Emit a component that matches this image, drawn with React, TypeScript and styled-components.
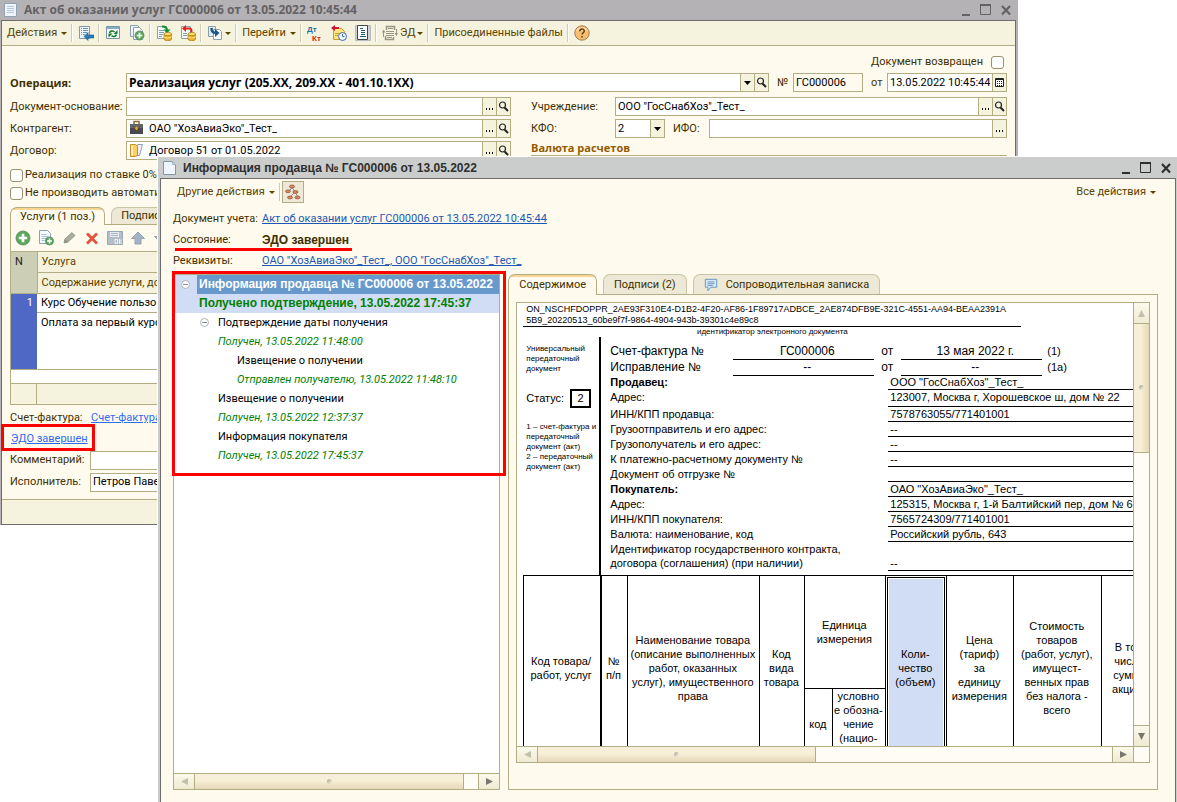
import React from 'react';
import styled, { createGlobalStyle, css } from 'styled-components';

const c = {
  cream: '#fefaee',
  beige: '#f5f3de',
  line: '#b3ad84',
  dark: '#6d6d6d',
  label: '#403000',
  menu: '#5a4200',
  red: '#ff0000',
  link: '#1c57b4',
  sel: '#d1dcf5',
};

const ui = "Roboto, 'Liberation Sans', sans-serif";
const uiBold = "'Open Sans', 'Liberation Sans', sans-serif";
const narrowBold = "'Liberation Sans', Arial, sans-serif";
const sheetFont = "'Liberation Sans', Arial, sans-serif";

const Global = createGlobalStyle`
  *, *::before, *::after { box-sizing: border-box; }
  body { margin: 0; background: #fff; color: #000; font: 11px/14px ${ui}; }
  button, input, select { font: inherit; color: inherit; margin: 0; }
  a { color: ${c.link}; }
`;

const Desktop = styled.main`
  position: relative;
  min-height: 100vh;
  overflow: hidden;
  background: #fff;
`;

/* ---------- windows ---------- */

const MainWindow = styled.section`
  position: absolute;
  top: 0;
  left: 0;
  right: 159px;
  display: flex;
  flex-direction: column;
  padding: 0 2px 0 1px;
  background: #b4b2b5;
`;

const InfoWindow = styled.section`
  position: absolute;
  top: 157px;
  left: 158px;
  right: 0;
  bottom: 0;
  display: flex;
  flex-direction: column;
  padding: 0 1px 0 2px;
  background: #cbcdcc;
  box-shadow: 0 -1px 0 #fff, -1px 0 0 #fff;
`;

const WindowTitle = styled.header<{ $active?: boolean }>`
  display: flex;
  align-items: center;
  gap: 6px;
  height: ${(p) => (p.$active ? 21 : 20)}px;
  padding: 0 2px 0 3px;
  color: ${(p) => (p.$active ? '#2e2e2e' : '#646264')};
  h1 {
    flex: 1;
    margin: 0;
    font: bold 12px/18px ${(p) => (p.$active ? narrowBold : uiBold)};
    white-space: nowrap;
  }
`;

const WindowButton = styled.button`
  display: flex;
  width: 16px;
  height: 16px;
  margin-left: -2px;
  padding: 0;
  border: 0;
  background: none;
`;

const WindowBody = styled.div`
  flex: 1;
  display: flex;
  flex-direction: column;
  min-height: 0;
  border: 1px solid ${c.dark};
  background: ${c.cream};
`;

const InfoBody = styled(WindowBody)`
  border-bottom: 0;
  padding: 2px 17px 12px 12px;
`;

/* ---------- toolbar ---------- */

const Toolbar = styled.div`
  display: flex;
  align-items: center;
  height: 25px;
  padding-left: 1px;
  background: ${c.beige};
  border-bottom: 1px solid ${c.line};
`;

const ToolButton = styled.button`
  display: flex;
  align-items: center;
  gap: 4px;
  padding: 0 4px;
  border: 0;
  background: none;
  color: ${c.menu};
  white-space: nowrap;
`;

const IconTool = styled(ToolButton)`
  gap: 2px;
`;

const Separator = styled.span`
  width: 2px;
  height: 18px;
  margin-right: 1px;
  background: linear-gradient(to right, #cfcbb4 50%, #fff 50%);
`;

const Arrow = styled.span`
  width: 0;
  height: 0;
  border: 3px solid transparent;
  border-top-color: currentColor;
  border-bottom-width: 0;
`;

/* ---------- form ---------- */

const Form = styled.form`
  display: flex;
  flex-direction: column;
  padding: 9px 8px 0;
  color: ${c.label};
`;

const ReturnedRow = styled.label`
  display: flex;
  justify-content: flex-end;
  align-items: center;
  gap: 8px;
  height: 14px;
  padding-right: 3px;
`;

const CheckBox = styled.input.attrs({ type: 'checkbox' })`
  appearance: none;
  width: 13px;
  height: 13px;
  border: 1px solid #9c916c;
  border-radius: 3px;
  background: #fff;
`;

const CheckLabel = styled.label`
  display: flex;
  align-items: center;
  gap: 2px;
  height: 18px;
  white-space: nowrap;
`;

const Checks = styled.div`
  display: flex;
  flex-direction: column;
  padding-top: 6px;
`;

const HeadRow = styled.div`
  display: flex;
  align-items: center;
  margin: 4px 0 5px;
`;

const Columns = styled.div`
  display: grid;
  grid-template-columns: 501fr 476fr;
  column-gap: 20px;
`;

const Column = styled.div`
  display: flex;
  flex-direction: column;
  gap: 3px;
`;

const Row = styled.div`
  display: flex;
  align-items: center;
`;

const Label = styled.label<{ $w: number; $bold?: boolean }>`
  flex: 0 0 ${(p) => p.$w}px;
  white-space: nowrap;
  ${(p) => p.$bold && css`font: bold 11px/16px ${uiBold};`}
`;

const Between = styled.label<{ $w: number }>`
  flex: 0 0 ${(p) => p.$w}px;
  padding-left: 8px;
`;

const Field = styled.div<{ $w?: number; $plain?: boolean }>`
  display: flex;
  align-items: stretch;
  flex: ${(p) => (p.$w ? `0 0 ${p.$w}px` : '1 1 0')};
  min-width: 0;
  height: 19px;
  border: 1px solid ${c.line};
  background: ${(p) => (p.$plain ? c.cream : '#fff')};
  color: #000;
  > svg {
    flex: none;
    margin: 0 0 0 2px;
  }
  input, select {
    flex: 1;
    width: 0;
    min-width: 0;
    padding: 0 2px;
    border: 0;
    outline: 0;
    background: none;
    appearance: none;
  }
  svg + input {
    padding-left: 4px;
  }
`;

const BoldField = styled(Field)`
  select { font: bold 12px/16px ${uiBold}; }
`;

const FieldButton = styled.button`
  display: flex;
  align-items: center;
  justify-content: center;
  flex: 0 0 14px;
  padding: 0;
  border: 0;
  border-left: 1px solid ${c.line};
  background: ${c.beige};
  color: #000;
`;

const GroupTitle = styled.h2`
  height: 15px;
  margin: 0;
  border-bottom: 1px solid ${c.line};
  color: #945c00;
  font: bold 11px/14px ${uiBold};
`;

/* ---------- tabs ---------- */

const Tabs = styled.div`
  position: relative;
  display: flex;
  gap: 6px;
  height: 21px;
  margin-bottom: -1px;
`;

const Tab = styled.button<{ $active?: boolean }>`
  display: flex;
  align-items: center;
  gap: 8px;
  height: ${(p) => (p.$active ? 21 : 20)}px;
  padding: 0 10px;
  border: 1px solid #c8c5a4;
  border-bottom: 0;
  border-radius: 7px 7px 0 0;
  background: #eee9d6;
  color: ${c.label};
  white-space: nowrap;
  ${(p) =>
    p.$active &&
    css`
      border-color: ${c.line};
      background: linear-gradient(#fbd592 2px, ${c.cream} 2px);
    `}
`;

const ServicesTabs = styled(Tabs)`
  margin-top: 5px;
  height: 18px;
  button {
    height: 18px;
    padding: 0 9px;
  }
  button:last-child { height: 17px; }
`;

const ServicesPanel = styled.div`
  border: 1px solid ${c.line};
  border-bottom: 0;
`;

const SmallTools = styled.div`
  display: flex;
  align-items: center;
  gap: 7px;
  height: 26px;
  padding-left: 4px;
  button {
    display: flex;
    padding: 0;
    border: 0;
    background: none;
  }
`;

const ServicesTable = styled.table`
  width: 100%;
  border-collapse: collapse;
  table-layout: fixed;
  color: #000;
  border-top: 1px solid ${c.line};
  th, td {
    padding: 0 4px;
    border-bottom: 1px solid ${c.line};
    font-weight: normal;
    text-align: left;
    vertical-align: top;
    white-space: nowrap;
    line-height: 18px;
    background: #fff;
  }
  th {
    height: 21px;
    line-height: 20px;
    background: ${c.beige};
    color: ${c.menu};
  }
  th:first-child[rowspan] {
    background: #cdceb6;
    color: #222;
    border-right: 1px solid ${c.line};
  }
`;

const RowNumber = styled.td`
  && {
    background: #4f68c6;
    color: #fff;
    text-align: right;
  }
`;

const CellLine = styled.td`
  height: 19px;
`;

const CellTall = styled.td`
  height: 57px;
  && { line-height: 20px; }
`;

const TableGap = styled.div`
  height: 13px;
  background: #fff;
`;

const TableFoot = styled.div`
  height: 22px;
  padding-left: 25px;
  border: solid ${c.line};
  border-width: 1px 0;
  background: ${c.beige};
  &::before {
    content: '';
    display: block;
    width: 1px;
    height: 20px;
    background: ${c.line};
  }
`;

const BrightLink = styled.a`
  color: #2f6bf0;
`;

const Footer = styled.div`
  display: grid;
  grid-template-rows: 22px 20px 22px 22px;
  padding-top: 2px;
`;

const Marked = styled.span`
  position: relative;
  padding-left: 1px;
  &::after {
    content: '';
    position: absolute;
    inset: -8px -7px -5px -9px;
    border: 3px solid ${c.red};
  }
`;

const StatusBar = styled.div`
  height: 25px;
  margin-top: 6px;
  border-top: 1px solid ${c.line};
  background: ${c.beige};
`;

/* ---------- seller information window ---------- */

const InfoTools = styled.div`
  display: flex;
  align-items: center;
  height: 22px;
  margin-bottom: 5px;
  > :last-child {
    margin-left: auto;
    padding-right: 2px;
  }
`;

const ToggleTool = styled.button`
  display: flex;
  align-items: center;
  justify-content: center;
  width: 22px;
  height: 22px;
  padding: 0;
  border: 1px solid ${c.line};
  background: #efe8d6;
`;

const Facts = styled.dl`
  display: grid;
  grid-template-columns: 89px 1fr;
  grid-auto-rows: 21px;
  align-items: center;
  margin: 0 0 3px;
  color: ${c.label};
  white-space: nowrap;
  dd { margin: 0; }
`;

const State = styled.dd`
  font: bold 12px/16px ${narrowBold};
`;

const StateTerm = styled.dt`
  position: relative;
  &::after {
    content: '';
    position: absolute;
    left: 2px;
    top: 15px;
    width: 177px;
    height: 3px;
    background: ${c.red};
  }
`;

const Split = styled.div`
  flex: 1;
  display: flex;
  gap: 8px;
  min-height: 0;
`;

const TreePane = styled.div`
  position: relative;
  flex: 326 1 0;
  display: flex;
  flex-direction: column;
  min-width: 0;
  border: 1px solid ${c.line};
  background: #fff;
  &::after {
    content: '';
    position: absolute;
    top: -4px;
    left: -2px;
    right: -7px;
    height: 205px;
    border: 3px solid ${c.red};
    pointer-events: none;
  }
`;

const Tree = styled.ul`
  flex: 1;
  margin: 0;
  padding: 0;
  list-style: none;
  overflow: hidden;
  line-height: 19px;
  white-space: nowrap;
`;

const Node = styled.li<{ $level: number; $selected?: boolean }>`
  display: grid;
  grid-template-columns: ${(p) => p.$level * 19 + 23}px 1fr;
  grid-auto-rows: 19px;
  align-items: center;
  > button {
    grid-row: 1;
    justify-self: end;
    display: flex;
    margin-right: 7px;
    padding: 0;
    border: 0;
    background: none;
  }
  ${(p) =>
    p.$selected &&
    css`
      background: ${c.sel};
      font: bold 12px/19px ${narrowBold};
    `}
`;

const NodeName = styled.span<{ $selected?: boolean }>`
  grid-column: 2;
  padding-left: 2px;
  ${(p) => p.$selected && css`background: #6899cd; color: #fff;`}
`;

const NodeState = styled.span<{ $selected?: boolean }>`
  grid-column: 2;
  padding-left: 2px;
  color: #008000;
  font-style: ${(p) => (p.$selected ? 'normal' : 'italic')};
`;

/* ---------- scroll bars ---------- */

const HBar = styled.div`
  display: flex;
  height: 16px;
  border-top: 1px solid ${c.line};
  background: #fffcf6;
`;

const VBar = styled.div`
  display: flex;
  flex-direction: column;
  width: 16px;
  border-left: 1px solid ${c.line};
  background: #fffcf6;
`;

const ScrollButton = styled.button<{ $side: 'left' | 'right' | 'top' | 'bottom' }>`
  display: flex;
  align-items: center;
  justify-content: center;
  flex: 0 0 21px;
  padding: 0;
  border: 0;
  border-${(p) => ({ left: 'right', right: 'left', top: 'bottom', bottom: 'top' })[p.$side]}: 1px solid ${c.line};
  background: linear-gradient(#fbf9ec, #efead2);
`;

const HThumb = styled.div<{ $share: number }>`
  display: flex;
  align-items: center;
  justify-content: center;
  flex: ${(p) => p.$share} 1 0;
  border-right: 1px solid ${c.line};
  background: linear-gradient(#f6eedb, #f8efd6 45%, #f0e6cb 65%, #e6d8ba);
`;

const VThumb = styled(HThumb)`
  border-right: 0;
  border-bottom: 1px solid ${c.line};
  background: linear-gradient(to right, #f6eedb, #f8efd6 45%, #f0e6cb 65%, #e6d8ba);
`;

const Track = styled.div<{ $share: number }>`
  flex: ${(p) => p.$share} 1 0;
`;

const Grip = styled.i`
  width: 5px;
  height: 5px;
  border-radius: 50%;
  background: linear-gradient(135deg, #a9a48c, #fbf7ea);
`;

/* ---------- document pane ---------- */

const DocPane = styled.div`
  flex: 651 1 0;
  display: flex;
  flex-direction: column;
  min-width: 0;
`;

const DocPanel = styled.div`
  flex: 1;
  display: flex;
  min-height: 0;
  padding: 7px 7px 26px;
  border: 1px solid ${c.line};
`;

const DocFrame = styled.div`
  flex: 1;
  display: grid;
  grid-template: minmax(0, 1fr) 16px / minmax(0, 1fr) 16px;
  border: 1px solid ${c.line};
  background: #fffcf6;
`;

const Corner = styled.div`
  border: solid ${c.line};
  border-width: 1px 0 0 1px;
`;

const Viewport = styled.div`
  overflow: hidden;
  background: #fff;
`;

const Sheet = styled.article`
  width: 640px;
  padding: 1px 0 0 6px;
  font: 11px/14px ${sheetFont};
  color: #000;
  white-space: nowrap;
`;

const Ident = styled.div`
  width: 498px;
  padding-left: 3px;
  border-bottom: 1px solid #000;
  font-size: 9px;
  line-height: 11px;
`;

const Tiny = styled.p`
  margin: 0;
  font-size: 8px;
  line-height: 10px;
`;

const IdentNote = styled(Tiny)`
  width: 498px;
  text-align: center;
`;

const SheetMain = styled.div`
  display: flex;
`;

const Side = styled.div`
  display: flex;
  flex-direction: column;
  gap: 14px;
  width: 78px;
  padding: 7px 0 0 3px;
  border-right: 2px solid #000;
`;

const Status = styled.div`
  display: flex;
  align-items: center;
  gap: 6px;
  height: 20px;
  b {
    width: 21px;
    height: 19px;
    border: 2px solid #000;
    font-weight: normal;
    line-height: 15px;
    text-align: center;
  }
`;

const Facture = styled.div`
  flex: 1;
  padding: 6px 0 4px 9px;
`;

const NumberRow = styled.div`
  display: grid;
  grid-template-columns: 123px 141px 27px 141px 1fr;
  height: 16px;
  font-size: 12px;
  line-height: 16px;
  > * { padding-left: 7px; }
  > :first-child { padding-left: 0; }
  > :last-child { padding-left: 5px; font-size: 11px; }
`;

const Blank = styled.span`
  border-bottom: 1px solid #000;
  text-align: center;
  line-height: 16px;
`;

const Pair = styled.div<{ $h?: number; $bold?: boolean; $bottom?: boolean }>`
  display: grid;
  grid-template-columns: 278px 1fr;
  height: ${(p) => p.$h ?? 15}px;
  > :first-child { font-weight: ${(p) => (p.$bold ? 'bold' : 'normal')}; }
  > :last-child {
    display: flex;
    align-items: ${(p) => (p.$bottom ? 'flex-end' : 'flex-start')};
    padding-left: 2px;
    border-bottom: 1px solid #000;
  }
`;

const GoodsTable = styled.table`
  width: 635px;
  table-layout: fixed;
  border-collapse: collapse;
  tr:first-child { height: 113px; }
  tr:last-child { height: 71px; }
  th {
    padding: 0 2px 0 0;
    border: 1px solid #000;
    font-weight: normal;
    text-align: center;
    vertical-align: middle;
  }
`;

const CodeHead = styled.th`
  && { border-right: 2px solid #000; }
`;

const QuantityHead = styled.th`
  background: ${c.sel};
  box-shadow: inset 0 0 0 1px #fff, inset 0 0 0 2px #000, inset 0 0 0 3px #fff;
`;

/* ---------- icons ---------- */

const Svg = ({ children, s = 16 }: { children: React.ReactNode; s?: number }) => (
  <svg width={s} height={s} viewBox="0 0 16 16" fill="none" aria-hidden="true">{children}</svg>
);

const PageShape = ({ x = 2, y = 1 }: { x?: number; y?: number }) => (
  <>
    <path d={`M${x + 0.5} ${y + 0.5}h8l3 3v10h-11z`} fill="#f5faff" stroke="#8aa0b3" />
    <path d={`M${x + 2.5} ${y + 4.5}h5m-5 2h7m-7 2h7m-7 2h5`} stroke="#a9c3d6" />
  </>
);

const TitlePage = ({ lined }: { lined?: boolean }) => (
  <svg width="14" height="16" viewBox="0 0 14 16" fill="none" aria-hidden="true">
    {lined ? (
      <>
        <path d="M.5 1.500h12v13H.5z" fill="#eef5fd" stroke="#8fa3b4" />
        <path d="M3 4.500h7m-7 2h7m-7 2h7m-7 2h7" stroke="#b5c9da" />
      </>
    ) : (
      <>
        <path d="M.5 1.500h9l3 3v10H.5z" fill="#eef5fd" stroke="#7f96a8" />
        <path d="M9.500 1.500v3h3" fill="#c9dceb" stroke="#9db4c5" />
      </>
    )}
  </svg>
);

const PostIcon = () => (
  <Svg>
    <path d="M1.500 1.500h10v12h-10z" fill="#eff6fb" stroke="#8399a8" />
    <path d="M3 3.500h1m1 0h5M3 5.500h1m1 0h5M3 7.500h1m1 0h4M3 9.500h1m1 0h2" stroke="#6b93ad" />
    <path d="M6 11.500l4-4v2.500h6v3h-6v2.500z" fill="#2a7cb5" stroke="#1b5e90" strokeWidth=".6" />
  </Svg>
);

const RefreshIcon = () => (
  <Svg>
    <path d="M1.500 1.500h13v12h-13z" fill="#f6fbfd" stroke="#7796a8" />
    <path d="M2 2h12v2H2z" fill="#83adc4" />
    <path d="M4.500 8c.6-2 3-2.600 5-1.200M11.500 9.500c-.6 2-3 2.600-5 1.200" stroke="#1c7b35" strokeWidth="1.600" />
    <path d="M12.500 5v4h-4zM3.500 12.500v-4h4z" fill="#1c7b35" />
  </Svg>
);

const PlusBall = ({ x, y, r }: { x: number; y: number; r: number }) => (
  <>
    <circle cx={x} cy={y} r={r} fill="#5aa95b" stroke="#5b8560" strokeWidth=".8" />
    <path d={`M${x - r * 0.6} ${y}h${r * 1.2}M${x} ${y - r * 0.6}v${r * 1.2}`} stroke="#fff" strokeWidth={r * 0.38} />
  </>
);

const CopyIcon = () => (
  <Svg>
    <path d="M1.500.5h7l2 2v9h-9z" fill="#eef4f8" stroke="#8ba0ae" />
    <path d="M4.500 2.500h6l3 3v9h-9z" fill="#f8fcff" stroke="#8ba0ae" />
    <PlusBall x={10.500} y={10.500} r={4.500} />
  </Svg>
);

const Coins = () => (
  <>
    <path d="M8 9v5c0 2.300 7.500 2.300 7.500 0V9z" fill="#e9ab1f" stroke="#a87408" strokeWidth=".7" />
    <ellipse cx="11.700" cy="9" rx="3.700" ry="1.600" fill="#ffe27a" stroke="#a87408" strokeWidth=".7" />
    <path d="M8 11.500c0 2 7.500 2 7.500 0" stroke="#fff0a8" />
  </>
);

const ReportIn = () => (
  <Svg>
    <path d="M1.500 1.500h9v12h-9z" fill="#f3f8fb" stroke="#8ba0ae" />
    <path d="M3 5.500h5m-5 2h5m-5 2h4m-4 2h3" stroke="#7ba0b5" />
    <path d="M6 1.500c3 0 5 1 5 4" stroke="#168f2c" strokeWidth="2" />
    <path d="M7.500 4.500h7l-3.500 4z" fill="#168f2c" />
    <Coins />
  </Svg>
);

const ReportOut = () => (
  <Svg>
    <path d="M1.500 1.500h9v12h-9z" fill="#f3f8fb" stroke="#8ba0ae" />
    <path d="M3 8.500h4m-4 2h4" stroke="#7ba0b5" />
    <path d="M5 3.500h4.500c2 0 2 1 2 4.500" stroke="#e02417" strokeWidth="2" />
    <path d="M6 0v7L2 3.500z" fill="#e02417" />
    <Coins />
  </Svg>
);

const BasedOnIcon = () => (
  <Svg>
    <path d="M1.500 1.500h7v10h-7z" fill="#e4ebf0" stroke="#8ba0ae" />
    <path d="M6.500 4.500h6l2 2v8h-8z" fill="#f6fafd" stroke="#8ba0ae" />
    <path d="M4.500 3c0 3 .5 4.800 4 4.800" stroke="#1f5485" strokeWidth="2.400" />
    <path d="M8 4l4.500 4L8 12z" fill="#1f5485" />
  </Svg>
);

const DtKtIcon = () => (
  <svg width="16" height="18" viewBox="0 0 16 18" aria-hidden="true">
    <text x="0" y="8" fontFamily="Liberation Sans" fontWeight="bold" fontSize="8" fill="#2471a8">Дт</text>
    <text x="5" y="17" fontFamily="Liberation Sans" fontWeight="bold" fontSize="8" fill="#d02a16">Кт</text>
  </svg>
);

const HistoryIcon = () => (
  <Svg>
    <path d="M2.500 3.500h8l3 3v8h-11z" fill="#ffe680" stroke="#c99f1f" />
    <path d="M4 8.500h4m-4 2h3" stroke="#c99f1f" />
    <path d="M0 3l4-3v2h4v2H4v2z" fill="#cf1333" />
    <circle cx="11.500" cy="11.500" r="4" fill="#f1f6ff" stroke="#3a6fb0" />
    <path d="M11.500 9v2.500h2" stroke="#3a6fb0" />
  </Svg>
);

const ListIcon = () => (
  <Svg>
    <path d="M.5.5h15v15H.5z" fill="#cfd2d3" stroke="#b9bcbd" />
    <path d="M2.500.5h10v14h-10z" fill="#fff" stroke="#3f464a" />
    <path d="M5 3.500h3m-2 2h4m-4 2h4m-4 2h4m-5 2h6" stroke="#1c5a78" />
  </Svg>
);

const EdIcon = () => (
  <Svg>
    <path d="M4.500 5V1.500h8V5M3.500 11v3.500h8V12" stroke="#9a9684" strokeWidth="1.500" />
    <path d="M6 3.500h5M4 6.500h8M4 8.500h8m-8 2h8M5 12.500h5" stroke="#9a9684" />
    <path d="M14.500 4v5M1.500 12V7" stroke="#9a9684" />
    <path d="M12.500 8H16l-1.500 3zM0 7.500h3.500L1.500 4.500z" fill="#9a9684" />
  </Svg>
);

const HelpIcon = () => (
  <Svg>
    <circle cx="8" cy="8" r="7.200" fill="#f7c071" stroke="#a5794a" />
    <path d="M2 6c1-5 11-5 12 0-3-1.500-9-1.500-12 0z" fill="#fff" opacity=".5" />
    <path d="M5.700 6.300c0-3 4.600-3 4.600-.2 0 1.600-2.200 1.500-2.200 3.500" stroke="#6b3d10" strokeWidth="1.500" />
    <path d="M7.300 11h1.600v1.500H7.300z" fill="#6b3d10" />
  </Svg>
);

const SearchIcon = () => (
  <svg width="11" height="11" viewBox="0 0 11 11" fill="none" aria-hidden="true">
    <circle cx="4.500" cy="4" r="3" stroke="#222" strokeWidth="1.200" />
    <path d="M6.500 6.500l3.500 3.500" stroke="#222" strokeWidth="2" />
  </svg>
);

const DotsIcon = () => (
  <svg width="9" height="9" viewBox="0 0 9 9" aria-hidden="true">
    <path d="M1 6h1v2H1zm3 0h1v2H4zm3 0h1v2H7z" fill="#000" />
  </svg>
);

const DownIcon = () => (
  <svg width="7" height="4" viewBox="0 0 7 4" aria-hidden="true"><path d="M0 0h7L3.500 4z" fill="#000" /></svg>
);

const CalendarIcon = () => (
  <svg width="9" height="9" viewBox="0 0 9 9" fill="none" aria-hidden="true">
    <path d="M.5.500h8v8h-8z" fill="#fff" stroke="#222" />
    <path d="M1 1h7v1H1z" fill="#222" />
    <path d="M2 3.500h6M2 5.500h6M2 7.500h6" stroke="#222" strokeDasharray="1 1" />
  </svg>
);

const CaseIcon = () => (
  <Svg>
    <path d="M5 4V1.500h5V4" stroke="#8b6b35" strokeWidth="1.500" />
    <path d="M1 4h13v10H1z" fill="#4a4a4c" />
    <path d="M1 4h13v4H1z" fill="#646466" />
    <path d="M7.500 6l1.500 2.500-1.500 2L6 8.500z" fill="#e8a727" />
  </Svg>
);

const ContractIcon = () => (
  <Svg>
    <path d="M8.500 2.500h5l-3 11h-4z" fill="#edf4f8" stroke="#8ba0ae" />
    <path d="M1.500 2.500h5l2 2v9l-2 1h-5z" fill="#ffcf62" stroke="#c98d20" />
    <path d="M3 3.500v10" stroke="#fff2c4" strokeWidth="2" />
  </Svg>
);

const TreeIcon = () => (
  <Svg>
    <path d="M7 3.500L4 7M7 3.500L10 8L5 13M10 8l3 5" stroke="#8a8a8a" />
    <g fill="#d98a62" stroke="#8a4a30" strokeWidth=".7">
      <ellipse cx="7" cy="2.500" rx="2.600" ry="1.500" />
      <ellipse cx="3" cy="7.300" rx="2.500" ry="1.400" />
      <ellipse cx="10.500" cy="8" rx="2.500" ry="1.400" />
      <ellipse cx="5" cy="13.500" rx="2.600" ry="1.400" />
      <ellipse cx="12.500" cy="13.500" rx="2.600" ry="1.400" />
    </g>
  </Svg>
);

const NoteIcon = () => (
  <Svg s={14}>
    <path d="M1.500 1.500h13v9H8l-3.500 4v-4h-3z" fill="#dbeaf6" stroke="#5c8cb8" />
    <path d="M4 4.500h8m-8 2h8m-8 2h6" stroke="#5c8cb8" />
  </Svg>
);

const MinusIcon = () => (
  <svg width="9" height="9" viewBox="0 0 9 9" fill="none" aria-hidden="true">
    <circle cx="4.500" cy="4.500" r="4" fill="#fff" stroke="#b3b3b3" />
    <path d="M2 4.500h5" stroke="#7c8ba5" />
  </svg>
);

const AddDocIcon = () => (
  <Svg><PageShape x={1} y={0} /><PlusBall x={11.500} y={11} r={4} /></Svg>
);

const PencilIcon = () => (
  <Svg>
    <path d="M3 13l1-4 7-6.500 3 3L7 12z" fill="#a9ab9b" stroke="#9b9d8b" />
    <path d="M3 13l1-4 3 3z" fill="#8f917f" />
  </Svg>
);

const DeleteIcon = () => (
  <Svg><path d="M3 3.500l10 10M13 3.500l-10 10" stroke="#e5523c" strokeWidth="2.800" /></Svg>
);

const SaveIcon = () => (
  <Svg>
    <path d="M.5 1.500h15v13H.5z" fill="#b3bec8" stroke="#9aa7b3" />
    <path d="M3 2h9v5H3z" fill="#e6ebef" />
    <path d="M4 3.500h7m-7 2h7" stroke="#aab6c1" />
    <path d="M8 9.500h2.500v4H8zM12.500 9v5M15 9.500l-2 2 2 2.500" stroke="#eef2f5" />
  </Svg>
);

const UpIcon = () => (
  <Svg><path d="M8 2l6.500 6.500H11V14H5V8.500H1.500z" fill="#a4b4c4" stroke="#91a2b3" /></Svg>
);

const DownToolIcon = () => (
  <Svg><path d="M8 13L1.500 6.500H5V2h6v4.500h3.500z" fill="#a4b4c4" stroke="#91a2b3" /></Svg>
);

const tri = { left: 'M8 0v8L0 4z', right: 'M0 0v8l8-4z', top: 'M0 8h8L4 0z', bottom: 'M0 0h8L4 8z' };
const triName = { left: 'влево', right: 'вправо', top: 'вверх', bottom: 'вниз' };

const Scroll = ({ side, off }: { side: keyof typeof tri; off?: boolean }) => (
  <ScrollButton type="button" $side={side} aria-label={`Прокрутить ${triName[side]}`}>
    <svg width="7" height="7" viewBox="0 0 8 8" aria-hidden="true">
      <path d={tri[side]} fill={off ? '#c2bfad' : '#77776f'} />
    </svg>
  </ScrollButton>
);

const ControlRow = styled(Row)`
  gap: 6px;
`;

const WindowControls = () => (
  <ControlRow>
    <WindowButton type="button" aria-label="Свернуть">
      <Svg><path d="M4 13h8" stroke="currentColor" strokeWidth="2" /></Svg>
    </WindowButton>
    <WindowButton type="button" aria-label="Развернуть">
      <Svg><path d="M2.500 4v8.500h10V4" stroke="currentColor" /><path d="M2 3h11" stroke="currentColor" strokeWidth="2" /></Svg>
    </WindowButton>
    <WindowButton type="button" aria-label="Закрыть">
      <Svg><path d="M4 4l8 8.500M12 4l-8 8.500" stroke="currentColor" strokeWidth="2.200" /></Svg>
    </WindowButton>
  </ControlRow>
);

/* ---------- data ---------- */

const nodes = [
  { level: 0, open: true, selected: true, name: 'Информация продавца № ГС000006 от 13.05.2022', state: 'Получено подтверждение, 13.05.2022 17:45:37' },
  { level: 1, open: true, name: 'Подтверждение даты получения', state: 'Получен, 13.05.2022 11:48:00' },
  { level: 2, name: 'Извещение о получении', state: 'Отправлен получателю, 13.05.2022 11:48:10' },
  { level: 1, name: 'Извещение о получении', state: 'Получен, 13.05.2022 12:37:37' },
  { level: 1, name: 'Информация покупателя', state: 'Получен, 13.05.2022 17:45:37' },
];

const pairs: { label: string; value: string; bold?: boolean; h?: number }[] = [
  { label: 'Продавец:', value: 'ООО "ГосСнабХоз"_Тест_', bold: true },
  { label: 'Адрес:', value: '123007, Москва г, Хорошевское ш, дом № 22', h: 17 },
  { label: 'ИНН/КПП продавца:', value: '7578763055/771401001' },
  { label: 'Грузоотправитель и его адрес:', value: '--' },
  { label: 'Грузополучатель и его адрес:', value: '--' },
  { label: 'К платежно-расчетному документу №', value: '--' },
  { label: 'Документ об отгрузке №', value: '' },
  { label: 'Покупатель:', value: 'ОАО "ХозАвиаЭко"_Тест_', bold: true },
  { label: 'Адрес:', value: '125315, Москва г, 1-й Балтийский пер, дом № 6' },
  { label: 'ИНН/КПП покупателя:', value: '7565724309/771401001' },
  { label: 'Валюта: наименование, код', value: 'Российский рубль, 643' },
];

const widths = [77, 27, 132, 45, 28, 53, 61, 67, 88, 57];

const lines = (parts: string[]) =>
  parts.map((part, i) => (
    <React.Fragment key={part}>{i > 0 && <br />}{part}</React.Fragment>
  ));

const Dots = () => <FieldButton type="button" aria-label="Выбрать"><DotsIcon /></FieldButton>;
const Search = () => <FieldButton type="button" aria-label="Открыть"><SearchIcon /></FieldButton>;
const Icon = ({ name, children }: { name: string; children: React.ReactNode }) => (
  <IconTool type="button" aria-label={name}>{children}</IconTool>
);

/* ---------- page ---------- */

function ActWindow() {
  return (
    <MainWindow>
      <WindowTitle>
        <TitlePage lined />
        <h1>Акт об оказании услуг ГС000006 от 13.05.2022 10:45:44</h1>
        <WindowControls />
      </WindowTitle>
      <WindowBody>
        <Toolbar>
          <ToolButton type="button">Действия<Arrow /></ToolButton>
          <Separator />
          <Icon name="Провести и закрыть"><PostIcon /></Icon>
          <Separator />
          <Icon name="Обновить"><RefreshIcon /></Icon>
          <Icon name="Скопировать"><CopyIcon /></Icon>
          <Separator />
          <Icon name="Провести"><ReportIn /></Icon>
          <Icon name="Отменить проведение"><ReportOut /></Icon>
          <Separator />
          <Icon name="Ввести на основании"><BasedOnIcon /><Arrow /></Icon>
          <Separator />
          <ToolButton type="button">Перейти<Arrow /></ToolButton>
          <Separator />
          <Icon name="Проводки"><DtKtIcon /></Icon>
          <Icon name="История"><HistoryIcon /></Icon>
          <Icon name="Список"><ListIcon /></Icon>
          <Separator />
          <IconTool type="button"><EdIcon />ЭД<Arrow /></IconTool>
          <Separator />
          <ToolButton type="button">Присоединенные файлы</ToolButton>
          <Separator />
          <Icon name="Справка"><HelpIcon /></Icon>
        </Toolbar>
        <Form>
          <ReturnedRow>Документ возвращен<CheckBox /></ReturnedRow>
          <HeadRow>
            <Label $w={116} $bold htmlFor="operation">Операция:</Label>
            <BoldField>
              <select id="operation"><option>Реализация услуг (205.XX, 209.XX - 401.10.1XX)</option></select>
              <FieldButton type="button" aria-label="Список операций"><DownIcon /></FieldButton>
              <Search />
            </BoldField>
            <Between $w={24} htmlFor="number">№</Between>
            <Field $w={70} $plain><input id="number" defaultValue="ГС000006" /></Field>
            <Between $w={24} htmlFor="date">от</Between>
            <Field $w={120}>
              <input id="date" defaultValue="13.05.2022 10:45:44" />
              <FieldButton type="button" aria-label="Календарь"><CalendarIcon /></FieldButton>
            </Field>
          </HeadRow>
          <Columns>
            <Column>
              <Row>
                <Label $w={116} htmlFor="basis">Документ-основание:</Label>
                <Field><input id="basis" /><Dots /><Search /></Field>
              </Row>
              <Row>
                <Label $w={116} htmlFor="partner">Контрагент:</Label>
                <Field><CaseIcon /><input id="partner" defaultValue={'ОАО "ХозАвиаЭко"_Тест_'} /><Dots /><Search /></Field>
              </Row>
              <Row>
                <Label $w={116} htmlFor="contract">Договор:</Label>
                <Field><ContractIcon /><input id="contract" defaultValue="Договор 51 от 01.05.2022" /><Dots /><Search /></Field>
              </Row>
            </Column>
            <Column>
              <Row>
                <Label $w={84} htmlFor="org">Учреждение:</Label>
                <Field><input id="org" defaultValue={'ООО "ГосСнабХоз"_Тест_'} /><Dots /><Search /></Field>
              </Row>
              <Row>
                <Label $w={84} htmlFor="kfo">КФО:</Label>
                <Field $w={50}>
                  <select id="kfo"><option>2</option></select>
                  <FieldButton type="button" aria-label="Список КФО"><DownIcon /></FieldButton>
                </Field>
                <Between $w={44} htmlFor="ifo">ИФО:</Between>
                <Field><input id="ifo" /><Dots /></Field>
              </Row>
              <GroupTitle>Валюта расчетов</GroupTitle>
            </Column>
          </Columns>
          <Checks>
            <CheckLabel><CheckBox />Реализация по ставке 0%</CheckLabel>
            <CheckLabel><CheckBox />Не производить автомати</CheckLabel>
          </Checks>
          <ServicesTabs>
            <Tab type="button" $active>Услуги (1 поз.)</Tab>
            <Tab type="button">Подписи</Tab>
          </ServicesTabs>
          <ServicesPanel>
            <SmallTools>
              <button type="button" aria-label="Добавить"><Svg><PlusBall x={8} y={8} r={7} /></Svg></button>
              <button type="button" aria-label="Добавить копированием"><AddDocIcon /></button>
              <button type="button" aria-label="Изменить"><PencilIcon /></button>
              <button type="button" aria-label="Удалить"><DeleteIcon /></button>
              <button type="button" aria-label="Записать"><SaveIcon /></button>
              <button type="button" aria-label="Вверх"><UpIcon /></button>
              <button type="button" aria-label="Вниз"><DownToolIcon /></button>
            </SmallTools>
            <ServicesTable>
              <colgroup><col width="26" /><col /></colgroup>
              <thead>
                <tr><th rowSpan={2}>N</th><th>Услуга</th></tr>
                <tr><th>Содержание услуги, до</th></tr>
              </thead>
              <tbody>
                <tr><RowNumber rowSpan={2}>1</RowNumber><CellLine>Курс Обучение пользо</CellLine></tr>
                <tr><CellTall>Оплата за первый курс</CellTall></tr>
              </tbody>
            </ServicesTable>
            <TableGap />
            <TableFoot />
          </ServicesPanel>
          <Footer>
            <Row><Label as="span" $w={81}>Счет-фактура:</Label><BrightLink href="#invoice">Счет-фактура</BrightLink></Row>
            <Row><Marked><BrightLink href="#edo">ЭДО завершен</BrightLink></Marked></Row>
            <Row><Label $w={80} htmlFor="comment">Комментарий:</Label><Field><input id="comment" /></Field></Row>
            <Row><Label $w={80} htmlFor="author">Исполнитель:</Label><Field><input id="author" defaultValue="Петров Павел" /></Field></Row>
          </Footer>
        </Form>
        <StatusBar />
      </WindowBody>
    </MainWindow>
  );
}

function SellerWindow() {
  return (
    <InfoWindow>
      <WindowTitle $active>
        <TitlePage />
        <h1>Информация продавца № ГС000006 от 13.05.2022</h1>
        <WindowControls />
      </WindowTitle>
      <InfoBody>
        <InfoTools>
          <ToolButton type="button">Другие действия<Arrow /></ToolButton>
          <Separator />
          <ToggleTool type="button" aria-label="Структура"><TreeIcon /></ToggleTool>
          <ToolButton type="button">Все действия<Arrow /></ToolButton>
        </InfoTools>
        <Facts>
          <dt>Документ учета:</dt>
          <dd><a href="#act">Акт об оказании услуг ГС000006 от 13.05.2022 10:45:44</a></dd>
          <StateTerm>Состояние:</StateTerm>
          <State>ЭДО завершен</State>
          <dt>Реквизиты:</dt>
          <dd><a href="#parties">ОАО "ХозАвиаЭко"_Тест_, ООО "ГосСнабХоз"_Тест_</a></dd>
        </Facts>
        <Split>
          <TreePane>
            <Tree>
              {nodes.map((n) => (
                <Node key={n.name + n.level} $level={n.level} $selected={n.selected}>
                  {n.open && <button type="button" aria-label="Свернуть ветвь"><MinusIcon /></button>}
                  <NodeName $selected={n.selected}>{n.name}</NodeName>
                  <NodeState $selected={n.selected}>{n.state}</NodeState>
                </Node>
              ))}
            </Tree>
            <HBar>
              <Scroll side="left" off />
              <HThumb $share={269}><Grip /></HThumb>
              <Track $share={14} />
              <Scroll side="right" />
            </HBar>
          </TreePane>
          <DocPane>
            <Tabs>
              <Tab type="button" $active>Содержимое</Tab>
              <Tab type="button">Подписи (2)</Tab>
              <Tab type="button"><NoteIcon />Сопроводительная записка</Tab>
            </Tabs>
            <DocPanel>
              <DocFrame>
                <Viewport><InvoiceSheet /></Viewport>
                <VBar>
                  <Scroll side="top" off />
                  <VThumb $share={128}><Grip /></VThumb>
                  <Track $share={273} />
                  <Scroll side="bottom" />
                </VBar>
                <HBar>
                  <Scroll side="left" off />
                  <HThumb $share={277}><Grip /></HThumb>
                  <Track $share={297} />
                  <Scroll side="right" />
                </HBar>
                <Corner />
              </DocFrame>
            </DocPanel>
          </DocPane>
        </Split>
      </InfoBody>
    </InfoWindow>
  );
}

function InvoiceSheet() {
  return (
    <Sheet>
      <Ident>
        ON_NSCHFDOPPR_2AE93F310E4-D1B2-4F20-AF86-1F89717ADBCE_2AE874DFB9E-321C-4551-AA94-BEAA2391A
        <br />
        5B9_20220513_60be9f7f-9864-4904-943b-39301c4e89c8
      </Ident>
      <IdentNote>идентификатор электронного документа</IdentNote>
      <SheetMain>
        <Side>
          <Tiny>{lines(['Универсальный', 'передаточный', 'документ'])}</Tiny>
          <Status>Статус: <b>2</b></Status>
          <Tiny>{lines(['1 – счет-фактура и', 'передаточный', 'документ (акт)'])}<br />{lines(['2 – передаточный', 'документ (акт)'])}</Tiny>
        </Side>
        <Facture>
          <NumberRow>
            <span>Счет-фактура №</span><Blank>ГС000006</Blank><span>от</span><Blank>13 мая 2022 г.</Blank><span>(1)</span>
          </NumberRow>
          <NumberRow>
            <span>Исправление №</span><Blank>--</Blank><span>от</span><Blank>--</Blank><span>(1а)</span>
          </NumberRow>
          {pairs.map((p, i) => (
            <Pair key={i} $h={p.h} $bold={p.bold}><span>{p.label}</span><span>{p.value}</span></Pair>
          ))}
          <Pair $h={29} $bottom>
            <span>Идентификатор государственного контракта,<br />договора (соглашения) (при наличии)</span>
            <span>--</span>
          </Pair>
        </Facture>
      </SheetMain>
      <GoodsTable>
        <colgroup>{widths.map((w, i) => <col key={i} width={w} />)}</colgroup>
        <thead>
          <tr>
            <CodeHead rowSpan={2}>{lines(['Код товара/', 'работ, услуг'])}</CodeHead>
            <th rowSpan={2}>{lines(['№', 'п/п'])}</th>
            <th rowSpan={2}>{lines(['Наименование товара', '(описание выполненных', 'работ, оказанных', 'услуг), имущественного', 'права'])}</th>
            <th rowSpan={2}>{lines(['Код', 'вида', 'товара'])}</th>
            <th colSpan={2}>{lines(['Единица', 'измерения'])}</th>
            <QuantityHead rowSpan={2}>{lines(['Коли-', 'чество', '(объем)'])}</QuantityHead>
            <th rowSpan={2}>{lines(['Цена', '(тариф)', 'за', 'единицу', 'измерения'])}</th>
            <th rowSpan={2}>{lines(['Стоимость', 'товаров', '(работ, услуг),', 'имущест-', 'венных прав', 'без налога -', 'всего'])}</th>
            <th rowSpan={2}>{lines(['В том', 'числе', 'сумма', 'акциза'])}</th>
          </tr>
          <tr>
            <th>код</th>
            <th>{lines(['условно', 'е обозна-', 'чение', '(нацио-', 'нальное)'])}</th>
          </tr>
        </thead>
      </GoodsTable>
    </Sheet>
  );
}

export default function App() {
  return (
    <>
      <Global />
      <Desktop>
        <ActWindow />
        <SellerWindow />
      </Desktop>
    </>
  );
}
